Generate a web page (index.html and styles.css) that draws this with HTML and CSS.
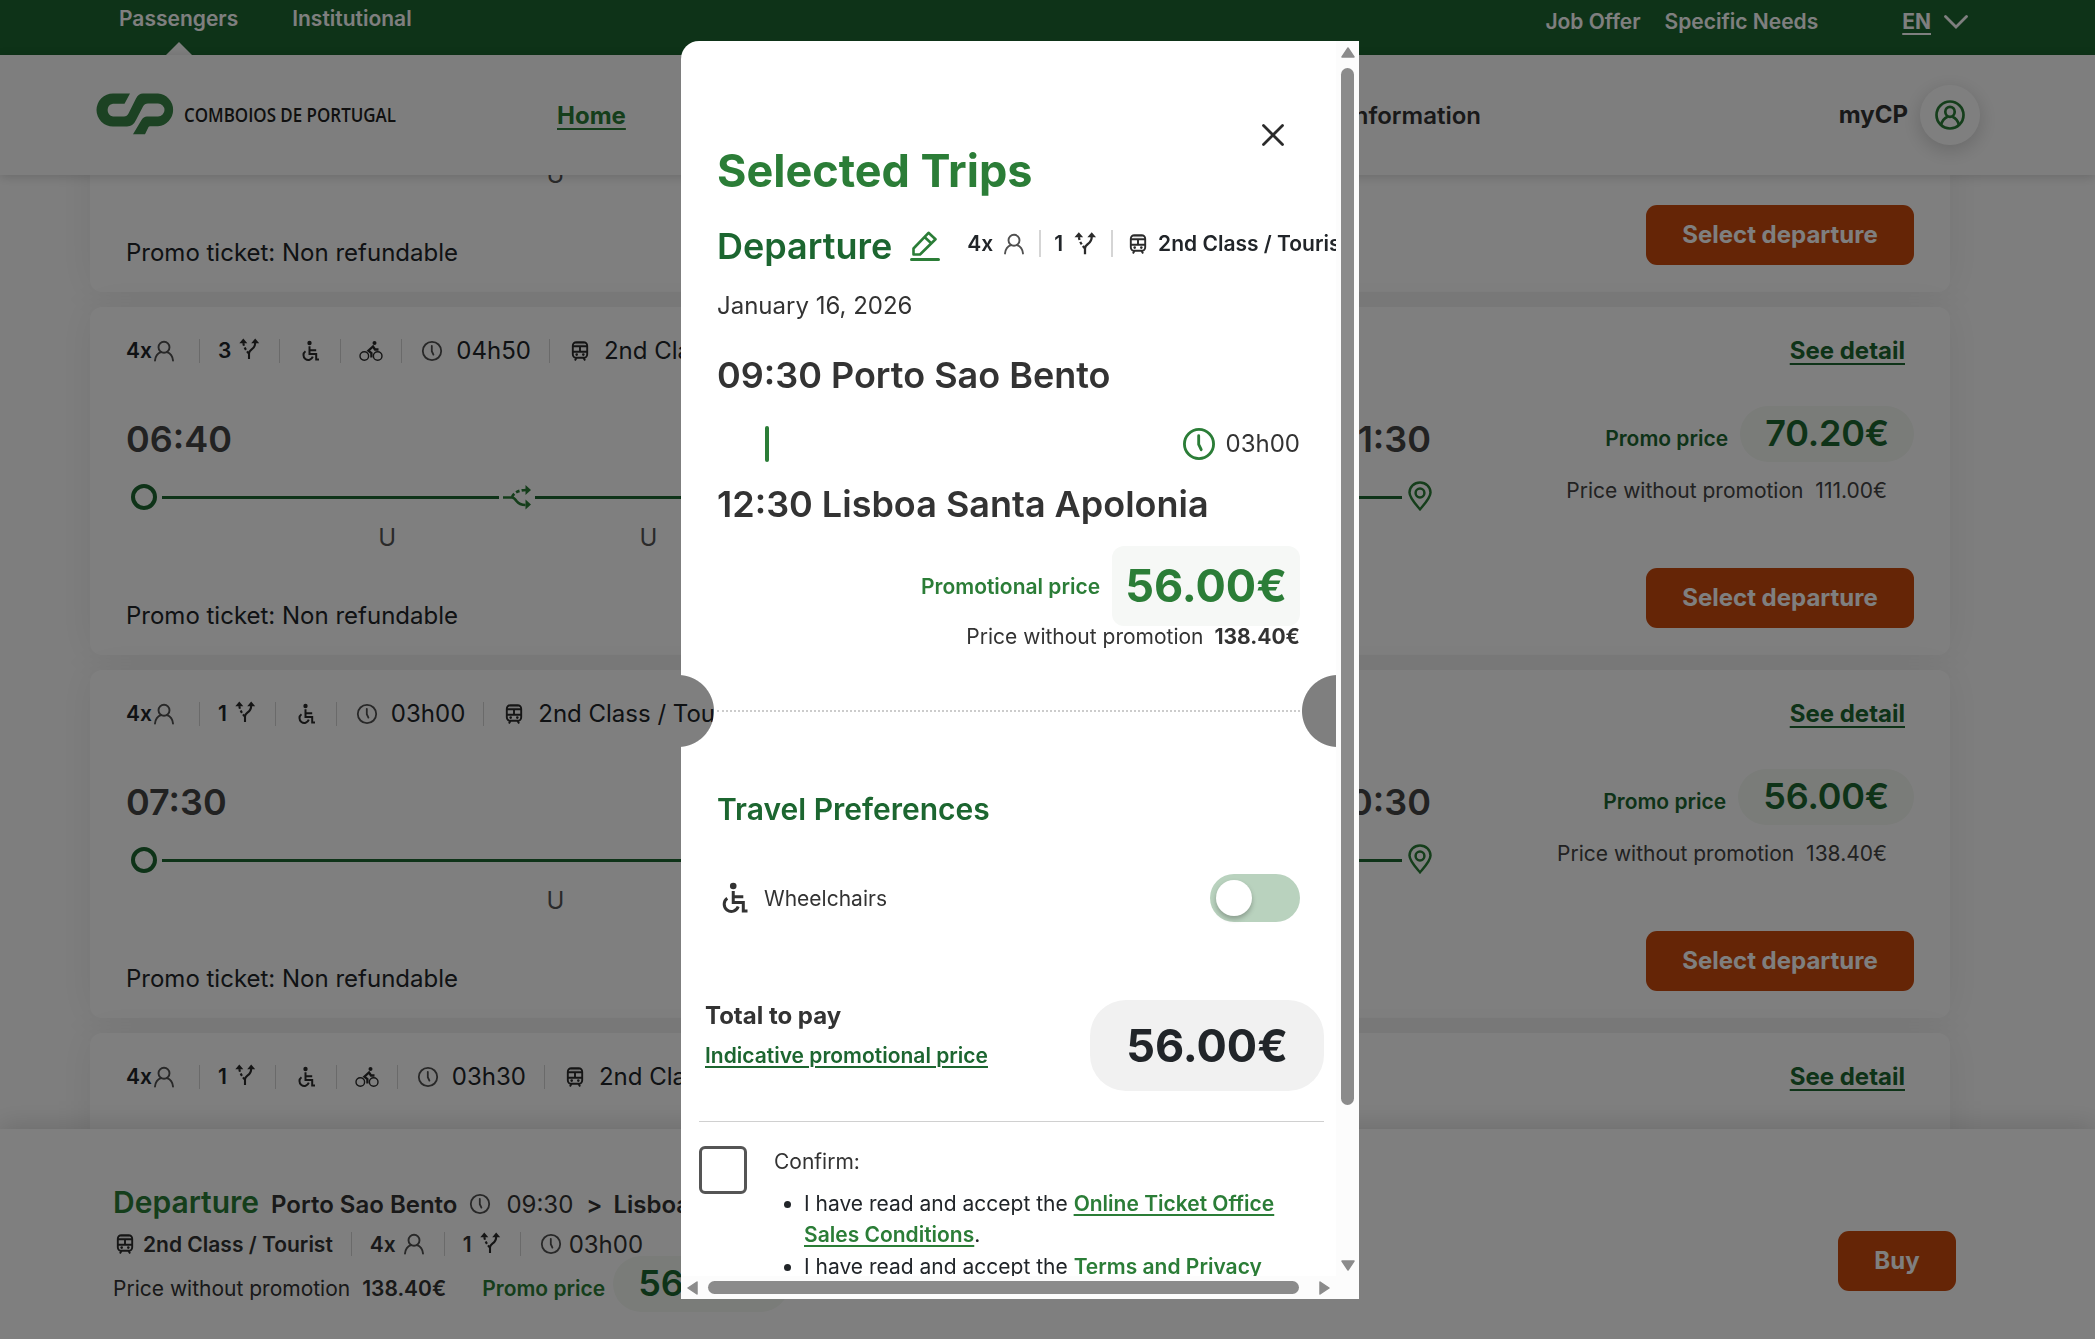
FILE: index.html
```html
<!DOCTYPE html>
<html lang="en">
<head>
    <meta charset="UTF-8">
    <title>CP | Comboios de Portugal</title>
    <link rel="stylesheet" href="styles.css">
</head>
<body>
    <!-- icon set -->
    <svg width="0" height="0" class="sprite">
        <symbol id="person" viewBox="0 0 24 24">
            <g fill="none" stroke="currentColor" stroke-width="1.9" stroke-linecap="round">
                <circle cx="12" cy="8.3" r="5.5"/>
                <path d="M3 21.5c.4-4 2.8-7.4 6-8.400M21 21.500c-.4-4-2.800-7.400-6-8.400"/>
            </g>
        </symbol>
        <symbol id="fork" viewBox="0 0 24 24">
            <path d="M12 22v-5.500q0-2 2.400-3.800Q18.300 10 18.200 5.500" fill="none" stroke="currentColor" stroke-width="2.100"/>
            <path d="M12 16.500Q6.500 11 6.300 5" fill="none" stroke="currentColor" stroke-width="2.100" stroke-dasharray="2.800 1.800"/>
            <path d="M18.200 1.500l4 4.800h-8zM6.300 1.500l4 4.800h-8z" fill="currentColor"/>
        </symbol>
        <symbol id="wheelchair" viewBox="0 0 24 24">
            <circle cx="11.500" cy="4" r="2.200" fill="currentColor"/>
            <path d="M11.500 7.300v7.700h6.700v5.600h2.800M11.500 11.200h6.700M7.500 12.200a4.800 4.800 0 1 0 7.300 5.500" fill="none" stroke="currentColor" stroke-width="2"/>
        </symbol>
        <symbol id="bike" viewBox="0 0 24 24">
            <g fill="none" stroke="currentColor" stroke-width="1.400">
                <circle cx="5.300" cy="17" r="4.300"/>
                <circle cx="18.700" cy="17" r="4.300"/>
                <path d="M12.400 18.500v-4.500l-3-2.300 4.600-4.200 2 3h3.500" stroke-width="2.300"/>
            </g>
            <circle cx="15.500" cy="4" r="2" fill="currentColor"/>
        </symbol>
        <symbol id="clock" viewBox="0 0 24 24">
            <g fill="none" stroke="currentColor" stroke-linecap="round" stroke-width="1.800">
                <circle cx="12" cy="12" r="9.200"/>
                <path d="M11.800 6.800v5.400l1.600 3.400"/>
            </g>
        </symbol>
        <symbol id="train" viewBox="0 0 24 24">
            <rect x="4.800" y="3.200" width="14.400" height="15.600" rx="3.500" fill="none" stroke="currentColor" stroke-width="1.900"/>
            <path d="M5 7.300h14M5 12.700h14M12 7.300v5.400" fill="none" stroke="currentColor" stroke-width="1.900"/>
            <path d="M7.500 4.700h9" stroke="currentColor" stroke-width="1" opacity=".5"/>
            <circle cx="8.700" cy="15.600" r="1.300" fill="currentColor"/>
            <circle cx="15.300" cy="15.600" r="1.300" fill="currentColor"/>
            <path d="M8.500 19l-1.600 2.500M15.500 19l1.600 2.500" fill="none" stroke="currentColor" stroke-width="1.900"/>
        </symbol>
        <symbol id="transfer" viewBox="0 0 30 26">
            <path d="M1 13.500h9q2 0 4.500 3.500 3 4 9 4" fill="none" stroke="currentColor" stroke-width="2.700"/>
            <path d="M10 13q3-6.800 14-7" fill="none" stroke="currentColor" stroke-width="2.700" stroke-dasharray="4 2.200"/>
            <path d="M23.500 1l5.500 5-5.500 5zM23.500 15.500l5.500 5-5.500 5z" fill="currentColor"/>
        </symbol>
        <symbol id="pin" viewBox="0 0 24 30">
            <path d="M12 28.300C8 23.500 1.500 17 1.500 11.500a10.500 10 0 0 1 21 0C22.500 17 16 23.500 12 28.300z" fill="none" stroke="currentColor" stroke-width="2.500"/>
            <circle cx="12" cy="12" r="4.400" fill="none" stroke="currentColor" stroke-width="2.500"/>
        </symbol>
    </svg>

    <div class="topbar">
        <a class="tab active">Passengers</a>
        <a class="tab">Institutional</a>
        <div class="topbar-right">
            <a>Job Offer</a>
            <a>Specific Needs</a>
            <a class="lang">EN</a>
            <svg class="chevron" viewBox="0 0 24 14"><path d="M1.500 1.500L12 12 22.500 1.500" fill="none" stroke="currentColor" stroke-width="2.800" stroke-linecap="round"/></svg>
        </div>
    </div>

    <header class="header">
        <svg class="logo" viewBox="0 0 302 42">
            <path d="M34 .5H17A16.500 16.500 0 0 0 17 33.500H31Q37 33.500 40 27L47 13.500Q48.500 10.500 52 10.500H62A6 6 0 0 1 62 23.500H51Q47.500 23.500 45.500 27L37 41.300H49L52.500 34Q53 33.200 54 33.200H62A16.400 16.400 0 0 0 62 .5H47Q42.500 .5 40 5.500L32.500 20.500Q31 23.500 28 23.500H17A6.500 6.500 0 0 1 17 10.700H28.500z" fill="#388446"/>
            <text x="88" y="29" textLength="212" lengthAdjust="spacingAndGlyphs">COMBOIOS DE PORTUGAL</text>
        </svg>
        <nav class="nav">
            <a class="current">Home</a>
            <a>Information</a>
        </nav>
        <a class="mycp">myCP</a>
        <span class="avatar">
            <svg viewBox="0 0 30 30" fill="none" stroke="currentColor" stroke-width="2.700">
                <circle cx="15" cy="15" r="13.500"/>
                <ellipse cx="15" cy="11.800" rx="4.700" ry="5"/>
                <path d="M6 25c1-4 3.500-7 6.500-8.300M24 25c-1-4-3.500-7-6.500-8.300"/>
            </svg>
        </span>
    </header>

    <main class="results">
        <section class="card">
            <div class="card-top"></div>
            <div class="times"></div>
            <div class="track"></div>
            <div class="services"><span>U</span><span>U</span></div>
            <div class="card-bottom">
                <span>Promo ticket: Non refundable</span>
                <button class="btn">Select departure</button>
            </div>
        </section>

        <section class="card">
            <div class="card-top">
                <ul class="info">
                    <li><b>4x</b><svg class="icon light"><use href="#person"/></svg></li>
                    <li><b>3</b><svg class="icon gap"><use href="#fork"/></svg></li>
                    <li><svg class="icon"><use href="#wheelchair"/></svg></li>
                    <li><svg class="icon"><use href="#bike"/></svg></li>
                    <li><svg class="icon light"><use href="#clock"/></svg><span>04h50</span></li>
                    <li><svg class="icon"><use href="#train"/></svg><span>2nd Class</span></li>
                </ul>
                <a class="detail">See detail</a>
            </div>
            <div class="times">
                <div class="hours"><span>06:40</span><span>11:30</span></div>
                <div class="price"><span class="promo">Promo price</span><span class="pill">70.20€</span></div>
            </div>
            <div class="track">
                <div class="line">
                    <i class="dot"></i>
                    <i class="rail first"></i><svg class="transfer"><use href="#transfer"/></svg>
                    <i class="rail"></i>
                    <svg class="pin"><use href="#pin"/></svg>
                </div>
                <p class="full">Price without promotion <span>111.00€</span></p>
            </div>
            <div class="services four"><span>U</span><span>U</span><span>U</span><span>U</span></div>
            <div class="card-bottom">
                <span>Promo ticket: Non refundable</span>
                <button class="btn">Select departure</button>
            </div>
        </section>

        <section class="card">
            <div class="card-top">
                <ul class="info">
                    <li><b>4x</b><svg class="icon light"><use href="#person"/></svg></li>
                    <li><b>1</b><svg class="icon gap"><use href="#fork"/></svg></li>
                    <li><svg class="icon"><use href="#wheelchair"/></svg></li>
                    <li><svg class="icon light"><use href="#clock"/></svg><span>03h00</span></li>
                    <li><svg class="icon"><use href="#train"/></svg><span>2nd Class / Tourist</span></li>
                </ul>
                <a class="detail">See detail</a>
            </div>
            <div class="times">
                <div class="hours"><span>07:30</span><span>10:30</span></div>
                <div class="price"><span class="promo">Promo price</span><span class="pill">56.00€</span></div>
            </div>
            <div class="track">
                <div class="line">
                    <i class="dot"></i>
                    <i class="rail"></i>
                    <svg class="pin"><use href="#pin"/></svg>
                </div>
                <p class="full">Price without promotion <span>138.40€</span></p>
            </div>
            <div class="services"><span>U</span><span>U</span></div>
            <div class="card-bottom">
                <span>Promo ticket: Non refundable</span>
                <button class="btn">Select departure</button>
            </div>
        </section>

        <section class="card">
            <div class="card-top">
                <ul class="info">
                    <li><b>4x</b><svg class="icon light"><use href="#person"/></svg></li>
                    <li><b>1</b><svg class="icon gap"><use href="#fork"/></svg></li>
                    <li><svg class="icon"><use href="#wheelchair"/></svg></li>
                    <li><svg class="icon"><use href="#bike"/></svg></li>
                    <li><svg class="icon light"><use href="#clock"/></svg><span>03h30</span></li>
                    <li><svg class="icon"><use href="#train"/></svg><span>2nd Class</span></li>
                </ul>
                <a class="detail">See detail</a>
            </div>
        </section>
    </main>

    <footer class="summary">
        <div class="summary-trip">
            <div class="summary-route">
                <span class="label">Departure</span>
                <b>Porto Sao Bento</b>
                <svg class="icon light"><use href="#clock"/></svg>
                <span class="hour">09:30</span>
                <b class="arrow">&gt;</b>
                <b>Lisboa</b>
            </div>
            <ul class="info summary-info">
                <li><svg class="icon"><use href="#train"/></svg><b>2nd Class / Tourist</b></li>
                <li><b>4x</b><svg class="icon light"><use href="#person"/></svg></li>
                <li><b>1</b><svg class="icon gap"><use href="#fork"/></svg></li>
                <li><svg class="icon light"><use href="#clock"/></svg><span>03h00</span></li>
            </ul>
            <div class="summary-price">
                <span>Price without promotion</span>
                <b>138.40€</b>
                <span class="promo">Promo price</span>
                <span class="pill">56.00€</span>
            </div>
        </div>
        <button class="btn buy">Buy</button>
    </footer>

    <div class="backdrop"></div>

    <div class="modal">
        <div class="modal-body">
            <div class="modal-head">
                <h1>Selected Trips</h1>
                <svg class="close" viewBox="0 0 30 30"><path d="M5.500 5.500l19 19M24.500 5.500l-19 19" stroke="#2b2b2b" stroke-width="2.800" stroke-linecap="round"/></svg>
            </div>
            <div class="trip-head">
                <h2>Departure</h2>
                <svg class="edit" viewBox="0 0 30 30" fill="none" stroke="currentColor" stroke-width="2.600" stroke-linejoin="round">
                    <path d="M3.500 23.500v-6L18.500 1.800l7 6.500L10 23.500zM14.500 6l7 6.500"/>
                    <path d="M1.500 28.500h27" stroke-width="3" stroke-linecap="round"/>
                </svg>
                <ul class="trip-meta">
                    <li><span>4x</span><svg class="icon light"><use href="#person"/></svg></li>
                    <li><span>1</span><svg class="icon fork"><use href="#fork"/></svg></li>
                    <li><svg class="icon"><use href="#train"/></svg><span>2nd Class / Tourist</span></li>
                </ul>
            </div>
            <p class="date">January 16, 2026</p>
            <p class="stop">09:30 Porto Sao Bento</p>
            <div class="duration">
                <i></i>
                <svg class="clock"><use href="#clock"/></svg>
                <span>03h00</span>
            </div>
            <p class="stop">12:30 Lisboa Santa Apolonia</p>
            <div class="promo-row"><span>Promotional price</span><strong>56.00€</strong></div>
            <p class="full-price">Price without promotion <b>138.40€</b></p>
            <div class="tear"></div>

            <h3>Travel Preferences</h3>
            <div class="pref">
                <svg class="wheelchair"><use href="#wheelchair"/></svg>
                <span>Wheelchairs</span>
                <span class="toggle"><i></i></span>
            </div>

            <div class="total">
                <div>
                    <p>Total to pay</p>
                    <a>Indicative promotional price</a>
                </div>
                <strong>56.00€</strong>
            </div>

            <div class="confirm">
                <span class="checkbox"></span>
                <div class="terms">
                    <p>Confirm:</p>
                    <ul>
                        <li>I have read and accept the <a>Online Ticket Office Sales Conditions</a>.</li>
                        <li>I have read and accept the <a>Terms and Privacy</a></li>
                    </ul>
                </div>
            </div>
        </div>
        <div class="scroll-y">
            <svg viewBox="0 0 14 11"><path d="M7 1l6 9H1z"/></svg>
            <i></i>
            <svg class="end" viewBox="0 0 14 11"><path d="M7 10L1 1h12z"/></svg>
        </div>
        <div class="scroll-x">
            <svg viewBox="0 0 11 14"><path d="M1 7l9-6v12z"/></svg>
            <i></i>
            <svg class="end" viewBox="0 0 11 14"><path d="M10 7l-9 6V1z"/></svg>
        </div>
        <div class="corner"></div>
    </div>
</body>
</html>
```

FILE: styles.css
```css
* {
    box-sizing: border-box;
}

body {
    margin: 0;
    width: 2095px;
    height: 1339px;
    overflow: hidden;
    display: flex;
    flex-direction: column;
    background: #fdfdfd;
    color: #212529;
    font-family: Inter, "Liberation Sans", sans-serif;
    font-size: 24px;
}

h1, h2, h3, p, ul {
    margin: 0;
    padding: 0;
}

ul {
    list-style: none;
}

b {
    font-weight: 600;
}

.sprite {
    position: absolute;
}

.icon {
    width: 24px;
    height: 24px;
    flex: none;
    color: #2b2b2b;
}

.icon.light {
    color: #505050;
}

/* top bar */
.topbar {
    flex: none;
    height: 55px;
    display: flex;
    padding: 0 127px 0 119px;
    background: #1c6630;
    color: #fff;
    font-size: 21px;
    font-weight: 600;
    line-height: 37px;
}

.tab {
    margin-right: 54px;
}

.tab.active::after {
    content: "";
    display: block;
    width: 0;
    margin: 5px auto 0;
    border: 13px solid transparent;
    border-top: 0;
    border-bottom-color: #fdfdfd;
}

.topbar-right {
    margin-left: auto;
    display: flex;
    line-height: 43px;
}

.topbar-right a {
    margin-right: 24px;
}

.topbar-right .lang {
    margin: 0 13px 0 60px;
    font-weight: 700;
    text-decoration: underline;
    text-underline-offset: 4px;
}

.chevron {
    width: 24px;
    height: 14px;
    margin-top: 15px;
}

/* header */
.header {
    flex: none;
    height: 120px;
    display: flex;
    align-items: center;
    padding: 0 115px 0 96px;
    background: #fdfdfd;
    box-shadow: 0 2px 10px rgba(0, 0, 0, .16);
    z-index: 1;
    color: #333;
    font-weight: 600;
}

.logo {
    width: 302px;
    height: 42px;
    margin-right: 159px;
    margin-bottom: 2px;
    overflow: visible;
}

.logo text {
    font-family: "Open Sans", sans-serif;
    font-size: 20px;
    font-weight: 600;
    fill: #212121;
}

.nav {
    width: 924px;
    display: flex;
    justify-content: space-between;
}

.nav .current {
    color: #2b7d37;
    font-weight: 700;
    text-decoration: underline;
    text-underline-offset: 4px;
    text-decoration-thickness: 2px;
}

.mycp {
    margin-left: auto;
    font-weight: 700;
    line-height: 28px;
}

.avatar {
    width: 60px;
    height: 60px;
    margin-left: 12px;
    border-radius: 50%;
    display: flex;
    align-items: center;
    justify-content: center;
    background: #fff;
    box-shadow: 0 5px 20px rgba(0, 0, 0, .18);
    color: #2b7d37;
}

.avatar svg {
    width: 30px;
    height: 30px;
}

/* results */
.results {
    flex: none;
    height: 954px;
    overflow: hidden;
    padding: 0 145px 0 90px;
}

.card {
    height: 348px;
    margin-bottom: 15px;
    padding: 24px 36px 0;
    border-radius: 12px;
    background: #fff;
    box-shadow: 0 0 40px rgba(0, 0, 0, .07);
}

.card:first-child {
    margin-top: -231px;
}

.card-top {
    height: 39px;
    display: flex;
    align-items: center;
    justify-content: space-between;
}

.info {
    display: flex;
    align-items: center;
}

.info li {
    height: 24px;
    display: flex;
    align-items: center;
    padding: 0 18px;
    border-left: 1px solid #d5d5d5;
    white-space: nowrap;
}

.info li:first-child {
    padding-left: 0;
    padding-right: 23px;
    border: 0;
}

.info b {
    font-size: 21px;
}

.info .gap {
    margin-left: 6px;
    margin-bottom: 3px;
}

.info .icon + span {
    margin-left: 12px;
}

.detail {
    margin-right: 9px;
    color: #1c6630;
    font-weight: 700;
    text-decoration: underline;
    text-decoration-thickness: 2px;
    text-underline-offset: 4px;
}

.times {
    height: 56px;
    margin-top: 36px;
    display: flex;
    justify-content: space-between;
}

.hours {
    width: 1305px;
    display: flex;
    justify-content: space-between;
    line-height: 66px;
    font-size: 36px;
    font-weight: 600;
    color: #444;
}

.price {
    display: flex;
}

.promo {
    margin-right: 12px;
    font-size: 21px;
    font-weight: 600;
    line-height: 66px;
    color: #1c6630;
}

.pill {
    height: 56px;
    padding: 0 25px;
    border-radius: 28px;
    background: #f4f8f3;
    color: #1c6630;
    font-size: 36px;
    font-weight: 600;
    line-height: 54px;
    letter-spacing: -.2px;
}

.track {
    height: 56px;
    display: flex;
    justify-content: space-between;
}

.line {
    width: 1306px;
    height: 70px;
    display: flex;
    align-items: center;
    color: #2b7d37;
}

.dot {
    width: 26px;
    height: 26px;
    margin: 0 5px 0 5px;
    border: 4px solid #1c6630;
    border-radius: 50%;
}

.rail {
    flex: 1;
    height: 3px;
    margin-top: 1px;
    background: #1c6630;
}

.rail.first {
    flex: none;
    width: 337px;
}

.transfer {
    width: 30px;
    height: 26px;
    margin: 0 3px;
}

.pin {
    width: 24px;
    height: 30px;
    margin-left: 6px;
    margin-top: -2px;
}

.full {
    margin-right: 27px;
    font-size: 21px;
    line-height: 57px;
    color: #444;
}

.full span {
    margin-left: 6px;
}

.services {
    height: 39px;
    width: 1306px;
    margin-left: -3px;
    display: flex;
    justify-content: space-evenly;
    line-height: 40px;
    color: #555;
}

.services.four {
    margin-left: 0;
}

.four span {
    width: 0;
    display: flex;
    justify-content: center;
}

.card-bottom {
    height: 60px;
    margin-top: 11px;
    display: flex;
    justify-content: space-between;
}

.card-bottom span {
    line-height: 95px;
}

.btn {
    width: 268px;
    height: 60px;
    padding: 0 0 2px;
    border: 0;
    border-radius: 11px;
    background: #cb4a0c;
    color: #fff;
    font: 700 24px Inter, "Liberation Sans", sans-serif;
}

/* sticky summary */
.summary {
    flex: none;
    height: 210px;
    display: flex;
    justify-content: space-between;
    padding: 53px 139px 0 113px;
    background: #fff;
    box-shadow: 0 -4px 24px rgba(0, 0, 0, .14);
    z-index: 1;
    color: #333;
}

.summary-route {
    display: flex;
    align-items: center;
    height: 44px;
}

.summary-route .label {
    margin: 0 12px 4px 0;
    font-size: 30px;
    font-weight: 600;
    line-height: 38px;
    color: #2b7d37;
}

.summary-route .icon {
    margin: 0 14px 0 11px;
}

.summary-route .arrow {
    margin: 0 11px 0 13px;
}

.summary-info {
    height: 36px;
}

.summary-info .icon + b {
    margin-left: 6px;
}

.summary-info li:first-child {
    padding-right: 18px;
}

.summary-info b + .light {
    margin-left: 6px;
}

.summary-info .icon + span {
    margin-left: 6px;
}

.summary-price {
    display: flex;
    height: 56px;
    margin-top: -6px;
    font-size: 21px;
    line-height: 65px;
}

.summary-price > b {
    margin: 0 36px 0 12px;
}

.summary-price .promo {
    margin-right: 8px;
    line-height: 65px;
    color: #2b7d37;
}

.buy {
    width: 118px;
    margin-top: 49px;
}

.backdrop {
    position: absolute;
    inset: 0;
    z-index: 2;
    background: rgba(0, 0, 0, .5);
}

/* modal */
.modal {
    position: absolute;
    left: 681px;
    top: 41px;
    z-index: 3;
    width: 678px;
    height: 1258px;
    display: grid;
    grid-template: 1235px 23px / 655px 23px;
    border-radius: 18px 0 0 0;
    overflow: hidden;
}

/* the two ticket notches are cut out of the sheet */
.modal-body {
    overflow: hidden;
    padding: 79px 36px 0;
    background: #fff;
    color: #333;
    mask-image:
        radial-gradient(circle at -3px 670px, transparent 35.5px, #000 36.500px),
        radial-gradient(circle at 657px 670px, transparent 35.5px, #000 36.500px);
    mask-composite: intersect;
}

.modal-head {
    height: 78px;
    display: flex;
    justify-content: space-between;
    align-items: flex-end;
}

.modal h1 {
    font-size: 45px;
    font-weight: 700;
    line-height: 54px;
    color: #2b7d37;
}

.close {
    width: 30px;
    height: 30px;
    align-self: flex-start;
    margin-right: 12px;
}

.trip-head {
    height: 44px;
    margin-top: 26px;
    display: flex;
    white-space: nowrap;
}

.modal h2 {
    font-size: 36px;
    font-weight: 600;
    line-height: 44px;
    color: #1c6630;
}

.edit {
    flex: none;
    width: 30px;
    height: 30px;
    margin: 7px 27px 0 18px;
    color: #2b7d37;
}

.trip-meta {
    display: flex;
    font-size: 21px;
    font-weight: 600;
    line-height: 39px;
    color: #212529;
}

.trip-meta li {
    height: 27px;
    margin-top: 6px;
    line-height: 27px;
    display: flex;
    align-items: center;
    padding-right: 13px;
}

.trip-meta li + li {
    padding-left: 13px;
    border-left: 2px solid #d5d5d5;
}

.trip-meta .light {
    margin-left: 9px;
}

.trip-meta .fork {
    margin-left: 9px;
    width: 26px;
    height: 27px;
}

.trip-meta .icon + span {
    margin-left: 8px;
}

.date {
    margin-top: 20px;
    line-height: 36px;
}

.stop {
    margin-top: 29px;
    font-size: 36px;
    font-weight: 600;
    line-height: 44px;
}

.duration {
    height: 36px;
    margin-top: 29px;
    display: flex;
    align-items: center;
    line-height: 34px;
    color: #333;
}

.duration i {
    width: 4px;
    height: 36px;
    margin: 0 auto 0 48px;
    border-radius: 2px;
    background: #2b7d37;
}

.clock {
    width: 38px;
    height: 38px;
    margin-right: 8px;
    color: #2b7d37;
}

.duration + .stop {
    margin-top: 20px;
}

.promo-row {
    height: 80px;
    margin-top: 20px;
    display: flex;
    justify-content: flex-end;
    align-items: center;
    font-size: 21px;
    font-weight: 600;
    color: #2b7d37;
}

.promo-row strong {
    margin-left: 12px;
    padding: 0 13px;
    border-radius: 12px;
    background: #f6f8f6;
    font-size: 45px;
    font-weight: 700;
    line-height: 80px;
}

.full-price {
    margin-top: -4px;
    font-size: 21px;
    line-height: 30px;
    text-align: right;
}

.full-price b {
    margin-left: 5px;
    font-weight: 700;
}

.tear {
    margin-top: 58px;
    border-top: 2px dotted #ccc;
}

.modal h3 {
    margin-top: 79px;
    font-size: 30px;
    font-weight: 600;
    line-height: 36px;
    color: #1c6630;
}

.pref {
    height: 48px;
    margin-top: 47px;
    display: flex;
    align-items: center;
    font-size: 21px;
}

.wheelchair {
    width: 36px;
    height: 36px;
    margin-left: -1px;
    margin-right: 12px;
}

.toggle {
    width: 90px;
    height: 48px;
    margin-left: auto;
    padding: 6px;
    border-radius: 24px;
    background: #b9d2be;
}

.toggle i {
    display: block;
    width: 36px;
    height: 36px;
    border-radius: 50%;
    background: #fff;
    box-shadow: 0 3px 5px rgba(0, 0, 0, .25);
}

.total {
    height: 122px;
    margin: 78px -24px 0 -18px;
    padding-left: 6px;
    display: flex;
    justify-content: space-between;
    align-items: flex-start;
    border-bottom: 1px solid #d0d0d0;
}

.total p {
    font-weight: 700;
    line-height: 31px;
}

.total a {
    font-size: 21px;
    font-weight: 600;
    line-height: 50px;
    color: #1c6630;
    text-decoration: underline;
    text-decoration-thickness: 2px;
    text-underline-offset: 3px;
}

.total strong {
    padding: 0 36px;
    border-radius: 36px;
    background: #f1f1f1;
    font-size: 45px;
    font-weight: 700;
    line-height: 91px;
    color: #212529;
}

.confirm {
    display: flex;
    margin: 24px 0 0 -18px;
    font-size: 21px;
    line-height: 31.500px;
}

.checkbox {
    flex: none;
    width: 48px;
    height: 48px;
    margin-right: 27px;
    border: 3px solid #555;
    border-radius: 6px;
}

.terms ul {
    margin-top: 10px;
    padding-left: 30px;
    list-style: disc;
    color: #212529;
}

.terms a {
    color: #2b7d37;
    font-weight: 600;
    text-decoration: underline;
    text-decoration-thickness: 2px;
    text-underline-offset: 3px;
}

.scroll-y, .scroll-x, .corner {
    background: #fcfcfc;
    fill: #8b8b8b;
    stroke: #8b8b8b;
    stroke-width: 1.5px;
    stroke-linejoin: round;
    display: flex;
}

.scroll-y {
    flex-direction: column;
    align-items: center;
    padding: 6px 0 5px;
}

.scroll-y svg {
    width: 14px;
    height: 11px;
}

.scroll-y i {
    width: 13px;
    height: 1037px;
    margin-top: 10px;
    border-radius: 7px;
    background: #8b8b8b;
}

.scroll-x {
    align-items: center;
    padding: 0 6px;
}

.scroll-x svg {
    width: 11px;
    height: 14px;
}

.scroll-x i {
    width: 591px;
    height: 13px;
    margin-left: 10px;
    border-radius: 7px;
    background: #8b8b8b;
}

.modal .end {
    margin-top: auto;
}

.scroll-x .end {
    margin: auto 0 auto auto;
}
```
